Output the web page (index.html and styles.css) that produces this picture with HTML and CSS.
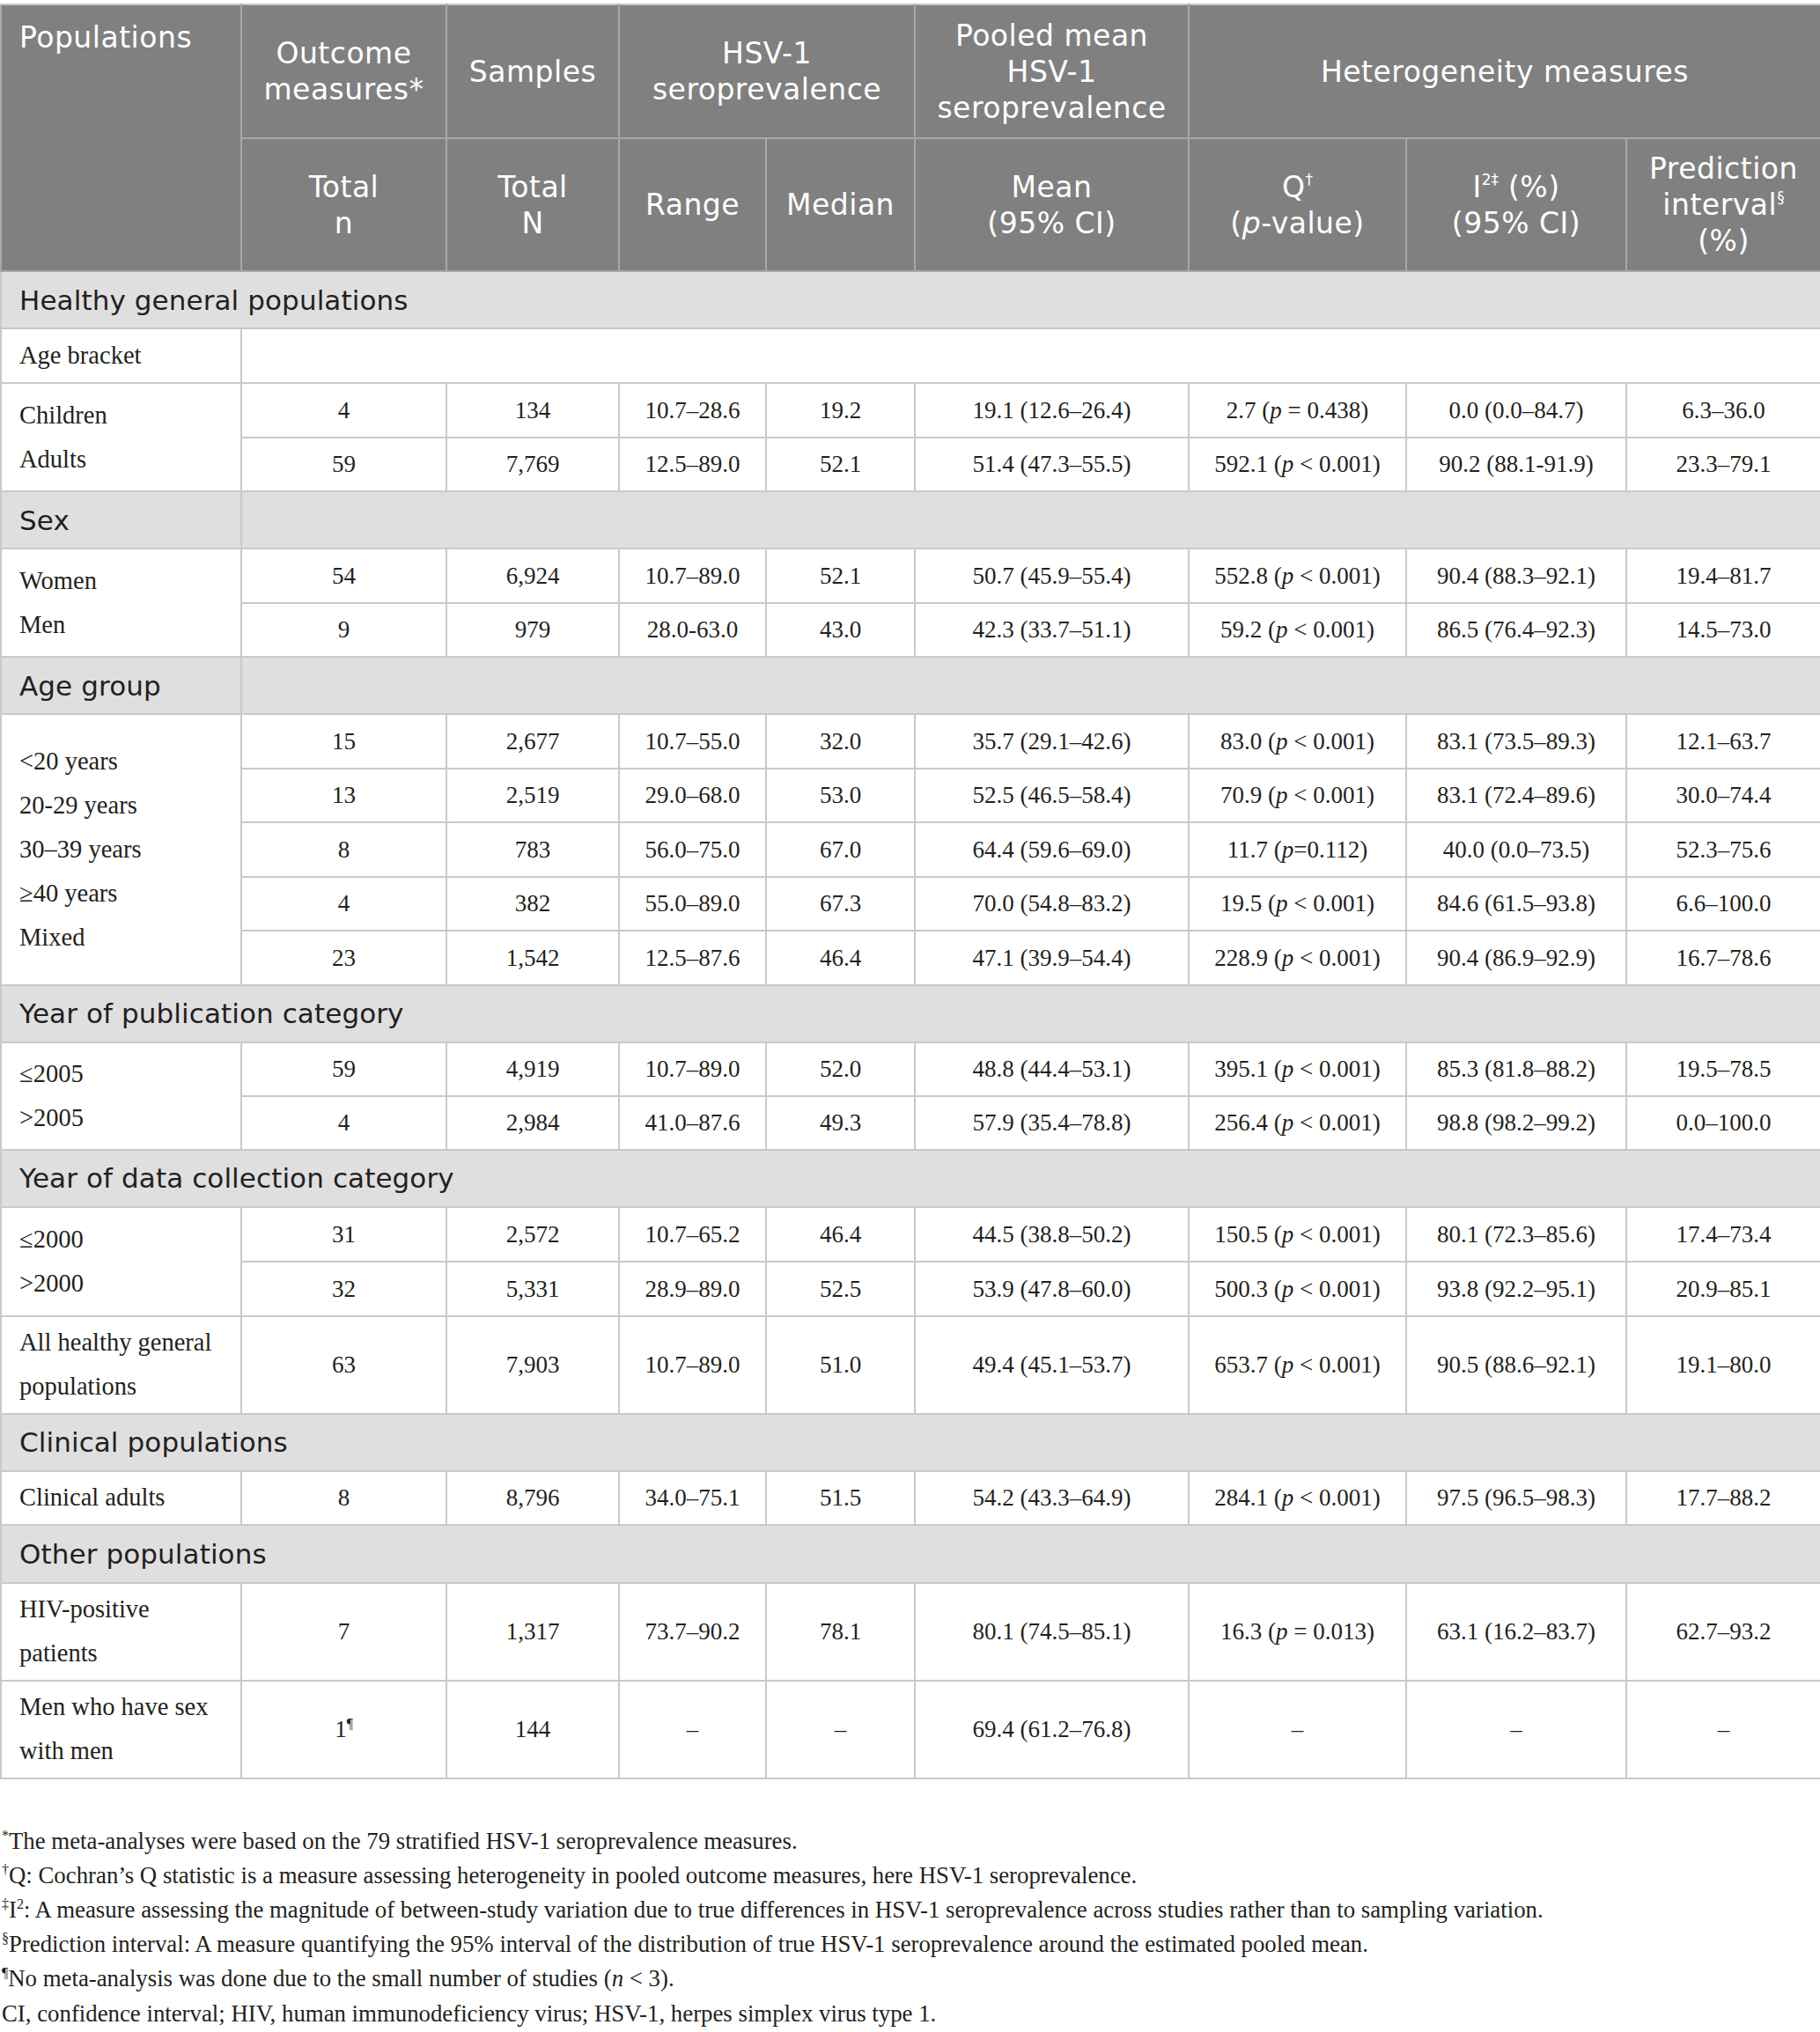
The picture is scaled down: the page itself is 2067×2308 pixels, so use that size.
FILE: index.html
```html
<!DOCTYPE html>
<html lang="en">
<head>
<meta charset="utf-8">
<title>HSV-1 seroprevalence meta-analyses</title>
<link rel="stylesheet" href="styles.css">
</head>
<body>
<div class="page">
<table class="tbl">
  <colgroup>
    <col class="c1"><col class="c2"><col class="c3"><col class="c4"><col class="c5"><col class="c6"><col class="c7"><col class="c8"><col class="c9">
  </colgroup>
  <thead>
    <tr class="hd1">
      <th rowspan="2" class="pop">Populations</th>
      <th>Outcome<br>measures*</th>
      <th>Samples</th>
      <th colspan="2">HSV-1<br>seroprevalence</th>
      <th>Pooled mean<br>HSV-1<br>seroprevalence</th>
      <th colspan="3">Heterogeneity measures</th>
    </tr>
    <tr class="hd2">
      <th>Total<br>n</th>
      <th>Total<br>N</th>
      <th>Range</th>
      <th>Median</th>
      <th>Mean<br>(95% CI)</th>
      <th>Q<sup class="hs">†</sup><br>(<i>p</i>-value)</th>
      <th>I<sup class="hs">2‡</sup> (%)<br>(95% CI)</th>
      <th>Prediction<br>interval<sup class="hs">§</sup><br>(%)</th>
    </tr>
  </thead>
  <tbody>
    <tr class="sec"><td colspan="9" class="sect">Healthy general populations</td></tr>
    <tr class="r62"><td class="lab">Age bracket</td><td colspan="8"></td></tr>
    <tr class="r">
      <td rowspan="2" class="lab multi">Children<br>Adults</td>
      <td>4</td><td>134</td><td>10.7–28.6</td><td>19.2</td><td>19.1 (12.6–26.4)</td><td>2.7 (<i>p</i> = 0.438)</td><td>0.0 (0.0–84.7)</td><td>6.3–36.0</td>
    </tr>
    <tr class="r">
      <td>59</td><td>7,769</td><td>12.5–89.0</td><td>52.1</td><td>51.4 (47.3–55.5)</td><td>592.1 (<i>p</i> &lt; 0.001)</td><td>90.2 (88.1-91.9)</td><td>23.3–79.1</td>
    </tr>
    <tr class="sec"><td class="sect">Sex</td><td colspan="8" class="sect"></td></tr>
    <tr class="r">
      <td rowspan="2" class="lab multi">Women<br>Men</td>
      <td>54</td><td>6,924</td><td>10.7–89.0</td><td>52.1</td><td>50.7 (45.9–55.4)</td><td>552.8 (<i>p</i> &lt; 0.001)</td><td>90.4 (88.3–92.1)</td><td>19.4–81.7</td>
    </tr>
    <tr class="r">
      <td>9</td><td>979</td><td>28.0-63.0</td><td>43.0</td><td>42.3 (33.7–51.1)</td><td>59.2 (<i>p</i> &lt; 0.001)</td><td>86.5 (76.4–92.3)</td><td>14.5–73.0</td>
    </tr>
    <tr class="sec"><td class="sect">Age group</td><td colspan="8" class="sect"></td></tr>
    <tr class="r">
      <td rowspan="5" class="lab multi">&lt;20 years<br>20-29 years<br>30–39 years<br>≥40 years<br>Mixed</td>
      <td>15</td><td>2,677</td><td>10.7–55.0</td><td>32.0</td><td>35.7 (29.1–42.6)</td><td>83.0 (<i>p</i> &lt; 0.001)</td><td>83.1 (73.5–89.3)</td><td>12.1–63.7</td>
    </tr>
    <tr class="r">
      <td>13</td><td>2,519</td><td>29.0–68.0</td><td>53.0</td><td>52.5 (46.5–58.4)</td><td>70.9 (<i>p</i> &lt; 0.001)</td><td>83.1 (72.4–89.6)</td><td>30.0–74.4</td>
    </tr>
    <tr class="r">
      <td>8</td><td>783</td><td>56.0–75.0</td><td>67.0</td><td>64.4 (59.6–69.0)</td><td>11.7 (<i>p</i>=0.112)</td><td>40.0 (0.0–73.5)</td><td>52.3–75.6</td>
    </tr>
    <tr class="r">
      <td>4</td><td>382</td><td>55.0–89.0</td><td>67.3</td><td>70.0 (54.8–83.2)</td><td>19.5 (<i>p</i> &lt; 0.001)</td><td>84.6 (61.5–93.8)</td><td>6.6–100.0</td>
    </tr>
    <tr class="r">
      <td>23</td><td>1,542</td><td>12.5–87.6</td><td>46.4</td><td>47.1 (39.9–54.4)</td><td>228.9 (<i>p</i> &lt; 0.001)</td><td>90.4 (86.9–92.9)</td><td>16.7–78.6</td>
    </tr>
    <tr class="sec"><td colspan="9" class="sect">Year of publication category</td></tr>
    <tr class="r61">
      <td rowspan="2" class="lab multi">≤2005<br>&gt;2005</td>
      <td>59</td><td>4,919</td><td>10.7–89.0</td><td>52.0</td><td>48.8 (44.4–53.1)</td><td>395.1 (<i>p</i> &lt; 0.001)</td><td>85.3 (81.8–88.2)</td><td>19.5–78.5</td>
    </tr>
    <tr class="r61">
      <td>4</td><td>2,984</td><td>41.0–87.6</td><td>49.3</td><td>57.9 (35.4–78.8)</td><td>256.4 (<i>p</i> &lt; 0.001)</td><td>98.8 (98.2–99.2)</td><td>0.0–100.0</td>
    </tr>
    <tr class="sec"><td colspan="9" class="sect">Year of data collection category</td></tr>
    <tr class="r62">
      <td rowspan="2" class="lab multi">≤2000<br>&gt;2000</td>
      <td>31</td><td>2,572</td><td>10.7–65.2</td><td>46.4</td><td>44.5 (38.8–50.2)</td><td>150.5 (<i>p</i> &lt; 0.001)</td><td>80.1 (72.3–85.6)</td><td>17.4–73.4</td>
    </tr>
    <tr class="r62">
      <td>32</td><td>5,331</td><td>28.9–89.0</td><td>52.5</td><td>53.9 (47.8–60.0)</td><td>500.3 (<i>p</i> &lt; 0.001)</td><td>93.8 (92.2–95.1)</td><td>20.9–85.1</td>
    </tr>
    <tr class="tall">
      <td class="lab multi">All healthy general<br>populations</td>
      <td>63</td><td>7,903</td><td>10.7–89.0</td><td>51.0</td><td>49.4 (45.1–53.7)</td><td>653.7 (<i>p</i> &lt; 0.001)</td><td>90.5 (88.6–92.1)</td><td>19.1–80.0</td>
    </tr>
    <tr class="sec"><td colspan="9" class="sect">Clinical populations</td></tr>
    <tr class="r61">
      <td class="lab">Clinical adults</td>
      <td>8</td><td>8,796</td><td>34.0–75.1</td><td>51.5</td><td>54.2 (43.3–64.9)</td><td>284.1 (<i>p</i> &lt; 0.001)</td><td>97.5 (96.5–98.3)</td><td>17.7–88.2</td>
    </tr>
    <tr class="sec66"><td colspan="9" class="sect">Other populations</td></tr>
    <tr class="tall">
      <td class="lab multi">HIV-positive<br>patients</td>
      <td>7</td><td>1,317</td><td>73.7–90.2</td><td>78.1</td><td>80.1 (74.5–85.1)</td><td>16.3 (<i>p</i> = 0.013)</td><td>63.1 (16.2–83.7)</td><td>62.7–93.2</td>
    </tr>
    <tr class="tall">
      <td class="lab multi">Men who have sex<br>with men</td>
      <td>1<sup class="bs">¶</sup></td><td>144</td><td>–</td><td>–</td><td>69.4 (61.2–76.8)</td><td>–</td><td>–</td><td>–</td>
    </tr>
  </tbody>
</table>

<div class="notes">
  <p><sup>*</sup>The meta-analyses were based on the 79 stratified HSV-1 seroprevalence measures.</p>
  <p><sup>†</sup>Q: Cochran’s Q statistic is a measure assessing heterogeneity in pooled outcome measures, here HSV-1 seroprevalence.</p>
  <p><sup>‡</sup>I<sup>2</sup>: A measure assessing the magnitude of between-study variation due to true differences in HSV-1 seroprevalence across studies rather than to sampling variation.</p>
  <p><sup>§</sup>Prediction interval: A measure quantifying the 95% interval of the distribution of true HSV-1 seroprevalence around the estimated pooled mean.</p>
  <p><sup>¶</sup>No meta-analysis was done due to the small number of studies (<i>n</i> &lt; 3).</p>
  <p>CI, confidence interval; HIV, human immunodeficiency virus; HSV-1, herpes simplex virus type 1.</p>
</div>
</div>
</body>
</html>
```

FILE: styles.css
```css
html, body {
  margin: 0;
  padding: 0;
  background: #ffffff;
}

.page {
  padding-top: 4px;
  width: 2067px;
}

.tbl {
  width: 2067px;
  border-collapse: collapse;
  table-layout: fixed;
  font-family: "Liberation Serif", "Times New Roman", serif;
  color: #231f20;
}

.c1 { width: 273px; }
.c2 { width: 233px; }
.c3 { width: 196px; }
.c4 { width: 167px; }
.c5 { width: 169px; }
.c6 { width: 311px; }
.c7 { width: 247px; }
.c8 { width: 250px; }
.c9 { width: 221px; }

.tbl th {
  background: #808080;
  color: #ffffff;
  font-family: "DejaVu Sans", "Open Sans", sans-serif;
  font-weight: 400;
  font-size: 33px;
  letter-spacing: 0.5px;
  line-height: 41px;
  text-align: center;
  vertical-align: middle;
  border: 2px solid #a8a8a8;
  padding: 0 4px;
}

.tbl thead tr:first-child th {
  border-top-color: #c8c8c8;
}

.tbl th.pop {
  text-align: left;
  vertical-align: top;
  padding: 16px 20px 0;
}

.tbl th i { font-style: italic; }

.hs {
  font-size: 17px;
  letter-spacing: 0;
  line-height: 0;
  vertical-align: 14px;
}

.hd1 { height: 152px; }
.hd2 { height: 151px; }

.tbl td {
  border: 2px solid #c9c9c9;
  text-align: center;
  vertical-align: middle;
  font-size: 27px;
  line-height: 30px;
  padding: 0 2px;
  white-space: nowrap;
}

.tbl td.lab {
  text-align: left;
  padding: 0 6px 0 20px;
  font-size: 28.5px;
}

.tbl td.multi {
  line-height: 50px;
}

.tbl td.sect {
  background: #e0dfe0;
  text-align: left;
  padding: 0 20px;
  font-family: "DejaVu Sans", "Open Sans", sans-serif;
  font-size: 31px;
  letter-spacing: 0.1px;
  line-height: 40px;
  color: #231f20;
}

.sec { height: 65px; }
.sec66 { height: 66px; }
.r { height: 61.5px; }
.r61 { height: 61px; }
.r62 { height: 62px; }
.tall { height: 111px; }

.bs {
  font-size: 16px;
  line-height: 0;
  vertical-align: 10px;
}

.notes {
  margin-top: 51px;
  padding-left: 2px;
  font-family: "Liberation Serif", "Times New Roman", serif;
  font-size: 26.8px;
  line-height: 39.2px;
  color: #231f20;
}

.notes p {
  margin: 0;
}

.notes sup {
  font-size: 16px;
  line-height: 0;
  vertical-align: 10px;
}
```
